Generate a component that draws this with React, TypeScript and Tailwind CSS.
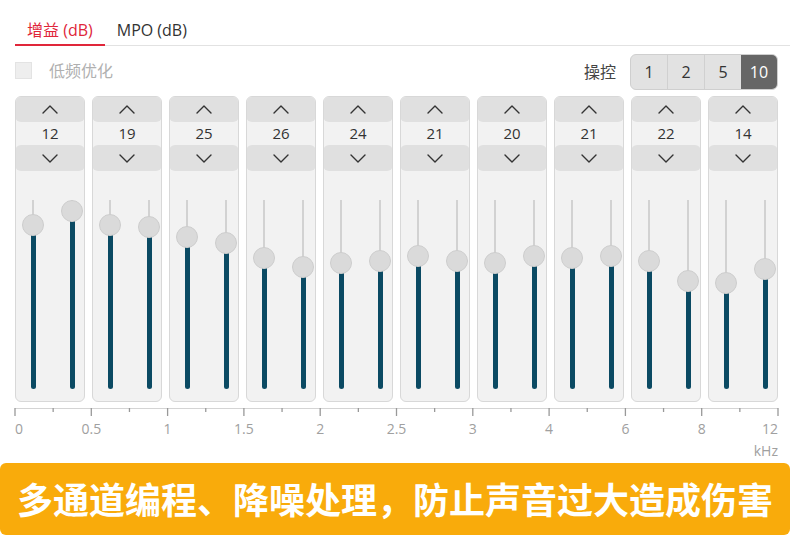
import React from "react";

const FONT = '"Open Sans", "Noto Sans CJK SC", sans-serif';

const channels: { v: number; a: number; b: number }[] = [
  { v: 12, a: 226, b: 212 },
  { v: 19, a: 226, b: 228 },
  { v: 25, a: 238, b: 244 },
  { v: 26, a: 259, b: 268 },
  { v: 24, a: 264, b: 262 },
  { v: 21, a: 257, b: 262 },
  { v: 20, a: 264, b: 257 },
  { v: 21, a: 259, b: 257 },
  { v: 22, a: 262, b: 282 },
  { v: 14, a: 284, b: 270 },
];

const AREA_TOP = 172;
const TRACK_TOP = 201;
const TRACK_BOTTOM = 390;

function Chevron({ up }: { up: boolean }) {
  return (
    <svg width="16" height="9" viewBox="0 0 16 9" fill="none">
      <polyline
        points={up ? "1,8 8,1 15,8" : "1,1 8,8 15,1"}
        stroke="#333"
        strokeWidth="1.4"
        strokeLinecap="round"
        strokeLinejoin="round"
      />
    </svg>
  );
}

function Slider({ y }: { y: number }) {
  const top = TRACK_TOP - AREA_TOP;
  const center = y - AREA_TOP;
  const bottom = TRACK_BOTTOM - AREA_TOP;
  return (
    <div className="relative w-[22px] h-full">
      <div
        className="absolute left-[10px] w-[2px] bg-[#d2d2d2]"
        style={{ top, height: center - top }}
      />
      <div
        className="absolute left-[8.5px] w-[5px] rounded-b-full bg-[#0b4a63]"
        style={{ top: center, height: bottom - center }}
      />
      <div
        className="absolute left-0 w-[22px] h-[22px] rounded-full bg-[#dadada] border border-[#cdcdcd]"
        style={{ top: center - 11 }}
      />
    </div>
  );
}

function Channel({ v, a, b }: { v: number; a: number; b: number }) {
  return (
    <div className="flex flex-col h-[306px] rounded-[6px] border border-[#d8d8d8] bg-[#f2f2f2] overflow-hidden">
      <div className="h-[26px] -mt-px -mx-px rounded-[6px] bg-[#e0e0e0] flex items-center justify-center">
        <Chevron up />
      </div>
      <div className="h-[23px] flex items-center justify-center text-[15px] text-[#333]">
        {v}
      </div>
      <div className="h-[26px] -mx-px rounded-[6px] bg-[#e0e0e0] flex items-center justify-center">
        <Chevron up={false} />
      </div>
      <div className="flex-1 flex justify-between pl-[6px] pr-[1px]">
        <Slider y={a} />
        <Slider y={b} />
      </div>
    </div>
  );
}

const ticks = [15, 91.3, 167.6, 243.9, 320.2, 396.5, 472.8, 549.1, 625.4, 701.7, 778];
const labels = ["0", "0.5", "1", "1.5", "2", "2.5", "3", "4", "6", "8", "12"];

export default function App() {
  return (
    <div
      className="relative w-[790px] h-[552px] bg-white overflow-hidden"
      style={{ fontFamily: FONT }}
    >
      {/* Tabs */}
      <div className="pt-[15px] pl-[15px]">
        <div className="flex h-[31px] border-b border-[#e2e2e2]">
          <div className="px-[12px] flex items-center text-[16px] text-[#e0263a] border-b-2 border-[#e0263a] -mb-px">
            增益 (dB)
          </div>
          <div className="px-[12px] flex items-center text-[16px] text-[#333]">
            MPO (dB)
          </div>
        </div>
      </div>

      {/* Options row */}
      <div className="mt-[8px] h-[36px] flex items-center justify-between pl-[15px] pr-[12px]">
        <div className="flex items-center gap-[17px] -mt-[3px]">
          <div className="w-[17px] h-[17px] bg-[#eeeeee] border border-[#e3e3e3]" />
          <span className="text-[16px] text-[#b0b0b0]">低频优化</span>
        </div>
        <div className="flex items-center gap-[14px]">
          <span className="text-[16px] text-[#444]">操控</span>
          <div className="flex h-[36px] rounded-[6px] border border-[#cfcfcf] bg-[#e2e2e2] overflow-hidden">
            <div className="w-[37px] flex items-center justify-center text-[16px] text-[#333] border-r border-[#d0d0d0]">1</div>
            <div className="w-[37px] flex items-center justify-center text-[16px] text-[#333] border-r border-[#d0d0d0]">2</div>
            <div className="w-[36px] flex items-center justify-center text-[16px] text-[#333]">5</div>
            <div className="w-[36px] flex items-center justify-center text-[16px] text-white bg-[#666666]">10</div>
          </div>
        </div>
      </div>

      {/* Channels */}
      <div className="mt-[6px] px-[15px] grid grid-cols-10 gap-[7px] w-[793px]">
        {channels.map((c, i) => (
          <Channel key={i} {...c} />
        ))}
      </div>

      {/* Axis */}
      <div className="relative h-[60px] mt-[5px]">
        <svg className="absolute left-0 top-0" width="790" height="14">
          <line x1="15" y1="1.5" x2="778" y2="1.5" stroke="#d4d4d4" strokeWidth="1" />
          {ticks.map((t, i) => (
            <line key={i} x1={t} y1="1" x2={t} y2="9" stroke="#999" strokeWidth="1.3" />
          ))}
          {ticks.slice(0, -1).map((t, i) => (
            <line key={"m" + i} x1={(t + ticks[i + 1]) / 2} y1="1" x2={(t + ticks[i + 1]) / 2} y2="5" stroke="#999" strokeWidth="1.3" />
          ))}
        </svg>
        {labels.map((l, i) => {
          const t = ticks[i];
          const cls =
            i === 0
              ? "absolute top-[11px] text-[14px] text-[#a0a0a0]"
              : i === labels.length - 1
              ? "absolute top-[11px] text-[14px] text-[#a0a0a0] -translate-x-full"
              : "absolute top-[11px] text-[14px] text-[#a0a0a0] -translate-x-1/2";
          return (
            <span key={l} className={cls} style={{ left: t }}>
              {l}
            </span>
          );
        })}
        <span className="absolute right-[12px] top-[33px] text-[14px] text-[#a0a0a0]">kHz</span>
      </div>

      {/* Banner */}
      <div className="absolute left-0 top-[463px] w-[790px] h-[72px] rounded-[6px] bg-[#f9ab0b] flex items-center pl-[17px]">
        <span
          className="text-white text-[36px] font-bold leading-none whitespace-nowrap -mt-[2px]"
          style={{ fontFamily: '"Noto Sans CJK SC", sans-serif' }}
        >
          多通道编程、降噪处理，防止声音过大造成伤害
        </span>
      </div>
    </div>
  );
}
